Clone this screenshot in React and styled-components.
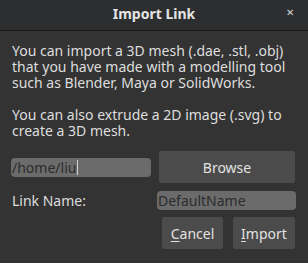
import React from "react";
import styled, { createGlobalStyle } from "styled-components";

const Global = createGlobalStyle`
  html, body { margin: 0; padding: 0; background: #333333; }
  * { box-sizing: border-box; }
`;

const Window = styled.div`
  width: 308px;
  height: 263px;
  background: #333333;
  font-family: "Noto Sans", "Open Sans", sans-serif;
  color: #dedede;
  display: flex;
  flex-direction: column;
  overflow: hidden;
`;

const TitleBar = styled.div`
  height: 31px;
  flex: none;
  background: #2c2e30;
  border-bottom: 1px solid #1c1c1c;
  display: flex;
  align-items: center;
  justify-content: center;
  position: relative;
`;

const Title = styled.div`
  font-weight: bold;
  font-size: 14px;
  color: #e4e4e4;
  margin-top: -4px;
`;

const Close = styled.div`
  position: absolute;
  right: 14px;
  top: 5px;
  font-size: 10px;
  color: #d8d8d8;
`;

const Body = styled.div`
  padding: 12px 12px 0 12px;
  display: flex;
  flex-direction: column;
`;

const Para = styled.p`
  margin: 0 0 16px 0;
  font-size: 14px;
  line-height: 16px;
  color: #dedede;
`;

const Row = styled.div`
  display: grid;
  grid-template-columns: 141px 137px;
  column-gap: ${(p) => p.gap || 8}px;
  align-items: center;
  margin-left: ${(p) => p.ml || 0}px;
  margin-top: ${(p) => p.mt || 0}px;
`;

const Field = styled.div`
  height: 19px;
  background: #6b6b6b;
  border-radius: 4px;
  font-size: 14px;
  line-height: 19px;
  color: #2c2c2c;
  padding-left: 1px;
  display: flex;
  align-items: center;
  width: ${(p) => p.w}px;
`;

const Caret = styled.span`
  display: inline-block;
  width: 1px;
  height: 15px;
  background: #d0d0d0;
  margin-left: 1px;
`;

const Button = styled.div`
  height: ${(p) => p.h || 32}px;
  width: ${(p) => p.w}px;
  background: #4b4b4b;
  border-radius: 2px;
  display: flex;
  align-items: center;
  justify-content: center;
  font-size: 14px;
  color: #e2e2e2;
`;

const Label = styled.div`
  font-size: 14px;
  color: #dedede;
`;

const Actions = styled.div`
  display: flex;
  justify-content: flex-end;
  gap: 10px;
  margin-top: 7px;
  margin-right: 13px;
`;

const U = styled.span`
  text-decoration: underline;
  text-underline-offset: 2px;
`;

export default function App() {
  return (
    <>
      <Global />
      <Window>
        <TitleBar>
          <Title>Import Link</Title>
          <Close>✕</Close>
        </TitleBar>
        <Body>
          <Para>
            You can import a 3D mesh (.dae, .stl, .obj) that you have made with a
            modelling tool such as Blender, Maya or SolidWorks.
          </Para>
          <Para style={{ marginBottom: 0 }}>
            You can also extrude a 2D image (.svg) to create a 3D mesh.
          </Para>
        </Body>
        <Row ml={11} mt={12} gap={7}>
          <Field w={140}>
            /home/liu
            <Caret />
          </Field>
          <Button w={136}>Browse</Button>
        </Row>
        <Row ml={12} mt={8} gap={4}>
          <Label>Link Name:</Label>
          <Field w={139}>DefaultName</Field>
        </Row>
        <Actions>
          <Button w={61}>
            <span>
              <U>C</U>ancel
            </span>
          </Button>
          <Button w={62}>
            <span>
              <U>I</U>mport
            </span>
          </Button>
        </Actions>
      </Window>
    </>
  );
}
